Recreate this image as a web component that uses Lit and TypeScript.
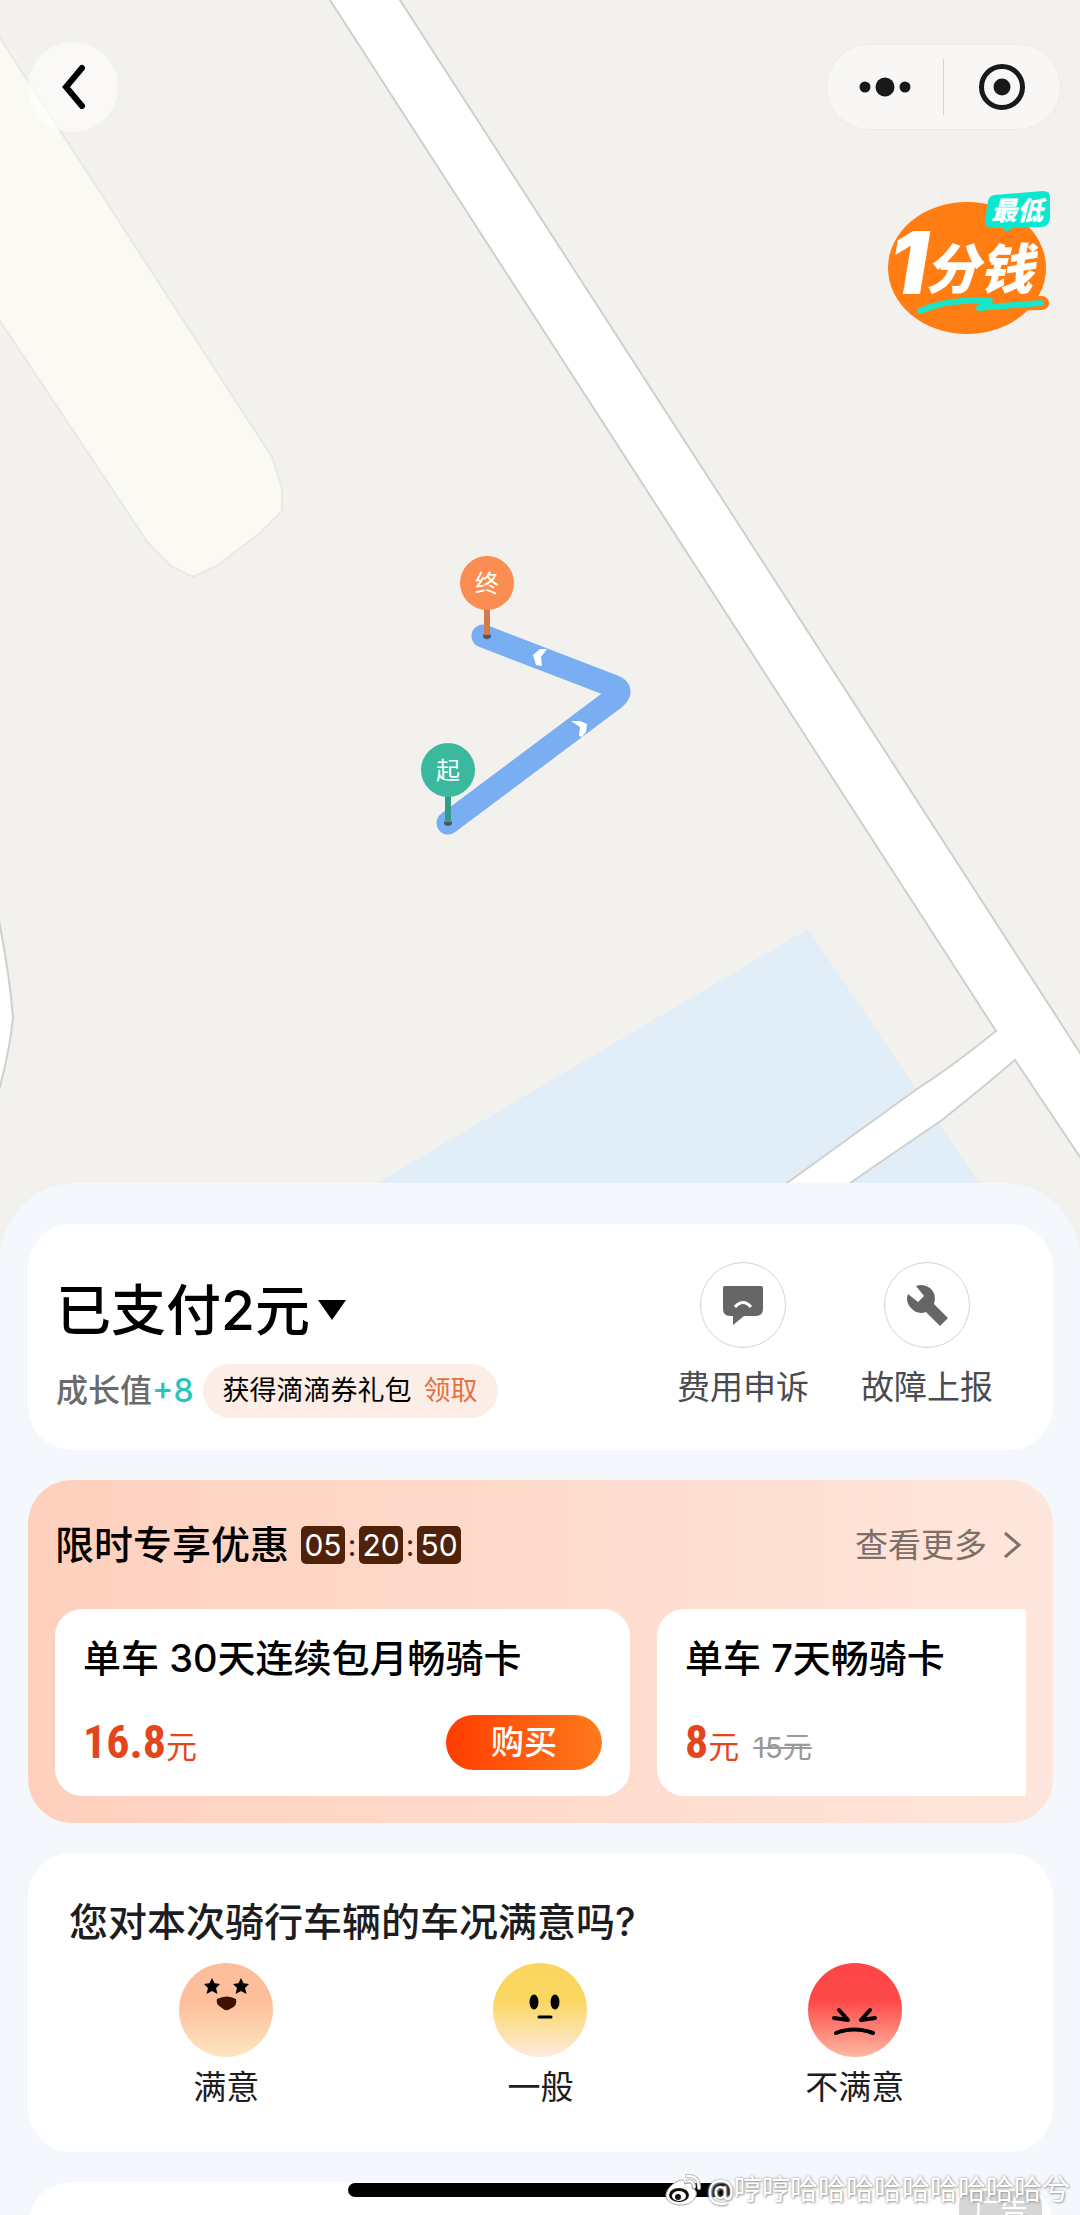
import { LitElement, html, css, svg, nothing } from 'lit';
import { customElement, property } from 'lit/decorators.js';

export interface RidePlan {
  name: string;
  price: string;
  original?: string;
  action?: string;
}

export interface RatingOption {
  label: string;
  mood: 'happy' | 'neutral' | 'angry';
}

@customElement('ride-map')
export class RideMap extends LitElement {
  static styles = css`
    :host {
      display: block;
      position: relative;
      background: #f2f1ed;
    }
    .map {
      display: block;
      width: 100%;
      height: auto;
    }
    .pin-text {
      font-family: "Noto Sans CJK SC", sans-serif;
      font-size: 24px;
      fill: #fff;
      text-anchor: middle;
    }
    button {
      border: 0;
      padding: 0;
      margin: 0;
      background: none;
      cursor: pointer;
    }
    svg {
      display: block;
    }
    .topbar {
      position: absolute;
      top: 42px;
      left: 28px;
      right: 19px;
      display: flex;
      justify-content: space-between;
      align-items: center;
    }
    .back {
      width: 90px;
      height: 90px;
      border-radius: 50%;
      background: rgba(255, 255, 255, 0.6);
      display: grid;
      place-items: center;
    }
    .capsule {
      display: flex;
      align-items: center;
      width: 235px;
      height: 86px;
      box-sizing: border-box;
      border: 1px solid #ecebe8;
      border-radius: 43px;
      background: #f8f7f5;
    }
    .capsule button {
      flex: 1;
      display: grid;
      place-items: center;
    }
    .divider {
      width: 1px;
      height: 56px;
      background: #d6d5d2;
    }
    .promo {
      position: absolute;
      top: 188px;
      right: 26px;
    }
    .promo text {
      font-family: Inter, "Noto Sans CJK SC", sans-serif;
      font-weight: 900;
      font-style: italic;
      fill: #fff;
    }
    .promo-one {
      font-size: 86px;
    }
    .promo-unit {
      font-size: 54px;
    }
    .promo-tag {
      font-size: 26px;
    }
  `;

  private _renderPin(x: number, y: number, label: string, fill: string, stem: string) {
    return svg`
      <ellipse cx=${x} cy=${y + 53} rx="4" ry="3" fill="#4b5a6b" />
      <rect x=${x - 3} y=${y + 24} width="6" height="28" fill=${stem} />
      <circle cx=${x} cy=${y} r="27" fill=${fill} />
      <text class="pin-text" x=${x} y=${y + 9}>${label}</text>
    `;
  }

  render() {
    return html`
      <svg class="map" viewBox="0 0 1080 1260" role="img" aria-label="骑行路线">
        <rect width="1080" height="1260" fill="#f2f1ed" />
        <path d="M-2 35 L272 457 L282 489 V511 L260 533 L217 566 L193 577 L171 566 L148 543 L-2 318Z"
          fill="#fafaf2" stroke="#e9e8e1" stroke-width="2" />
        <path d="M808 929 L377 1183 L250 1260 H1032Z" fill="#e1eef8" />
        <path d="M328 -3 L996 1031 Q950 1068 917 1089 L787 1183 L680 1260 H740 L850 1183 L942 1120 Q980 1090 1015 1060 L1082 1160 V1056 L398 -3Z"
          fill="#fff" stroke="#cfcfcd" stroke-width="2" />
        <path d="M-2 916 Q9 970 13 1017 Q10 1050 -2 1094Z" fill="#fff" stroke="#cfcfcd" stroke-width="2" />
        <path d="M448 823 L615 698 Q624 690 613 686 L483 636" fill="none" stroke="#79aff2" stroke-width="23"
          stroke-linecap="round" stroke-linejoin="round" />
        <path d="M533 655 l7 -6 h7 l-6 8 l1 9 l-6 -1z" fill="#fff" />
        <path d="M571 721 l9 0 l7 3 l-1 8 l-4 5 l-3 -1 l1 -9z" fill="#fff" />
        ${this._renderPin(487, 583, '终', '#fb8d52', '#d57a4b')}
        ${this._renderPin(448, 770, '起', '#3bb99f', '#329c87')}
      </svg>

      <div class="topbar">
        <button class="back" aria-label="返回">
          <svg width="30" height="50" viewBox="0 0 30 50">
            <path d="M24 6 L8 25 L24 44" fill="none" stroke="#000" stroke-width="6" stroke-linecap="round" />
          </svg>
        </button>
        <div class="capsule">
          <button aria-label="更多">
            <svg width="54" height="20" viewBox="0 0 54 20" fill="#19191a">
              <circle cx="7" cy="10" r="5.5" />
              <circle cx="27" cy="10" r="9.5" />
              <circle cx="47" cy="10" r="5.5" />
            </svg>
          </button>
          <span class="divider"></span>
          <button aria-label="关闭">
            <svg width="48" height="48" viewBox="0 0 48 48">
              <circle cx="24" cy="24" r="20.5" fill="none" stroke="#19191a" stroke-width="5" />
              <circle cx="24" cy="24" r="8.5" fill="#19191a" />
            </svg>
          </button>
        </div>
      </div>

      <button class="promo" aria-label="最低1分钱">
        <svg width="168" height="150" viewBox="0 0 168 150">
          <ellipse cx="81" cy="80" rx="79" ry="66" fill="#ff7d12" />
          <path d="M32 122 C50 111 75 107 104 111 L91 117 L156 115" fill="none" stroke="#ff7d12"
            stroke-width="14" stroke-linecap="round" stroke-linejoin="round" />
          <path d="M34 123 C54 114 76 111 104 113 L93 120 L155 115" fill="none" stroke="#1be5c8"
            stroke-width="6" stroke-linecap="round" stroke-linejoin="round" />
          <path d="M108 7 L157 3 Q164 3 164 9 V31 Q163 38 156 39 L126 40 L121 44 L117 40 L105 40 Q98 39 99 32 L102 13 Q103 8 108 7Z"
            fill="#0ce8cf" />
          <text class="promo-one" x="3" y="106">1</text>
          <text class="promo-unit" x="39" y="101">分钱</text>
          <text class="promo-tag" x="105" y="32">最低</text>
        </svg>
      </button>
    `;
  }
}

@customElement('rating-face')
export class RatingFace extends LitElement {
  static styles = css`
    :host {
      display: block;
    }
    svg {
      display: block;
    }
  `;

  @property()
  mood: RatingOption['mood'] = 'happy';

  private _colors() {
    if (this.mood === 'happy') return ['#fcbd9c', '#fdbf9b', '#fde5c2'];
    if (this.mood === 'neutral') return ['#fad65f', '#fad761', '#fdeae0'];
    return ['#fe4547', '#fd4948', '#fdb9a3'];
  }

  private _features() {
    if (this.mood === 'happy') {
      const star = 'M0 -8 L2.5 -2.8 L8 -2 L4 2 L5.5 8 L0 5 L-5.5 8 L-4 2 L-8 -2 L-2.5 -2.8Z';
      return svg`
        <path d=${star} transform="translate(33 23)" />
        <path d=${star} transform="translate(62 23)" />
        <path d="M38 36 Q48 31 57 36 Q59 43 51 46 Q47 49 43 45 Q36 41 38 36Z" fill="#3f1200" />
      `;
    }
    if (this.mood === 'neutral') {
      return svg`
        <ellipse cx="41" cy="39" rx="4.5" ry="7.5" />
        <ellipse cx="62" cy="39" rx="4.5" ry="7.5" />
        <path d="M46 54 H58" fill="none" stroke="#000" stroke-width="3" stroke-linecap="round" />
      `;
    }
    return svg`
      <g fill="none" stroke="#000" stroke-width="4" stroke-linecap="round" stroke-linejoin="round">
        <path d="M31 47 L40 57 L26 55" />
        <path d="M62 47 L53 57 L67 55" />
        <path d="M28 70 Q46 63 65 70" />
      </g>
    `;
  }

  render() {
    const [top, mid, bottom] = this._colors();
    return html`
      <svg width="94" height="94" viewBox="0 0 94 94" aria-hidden="true">
        <defs>
          <linearGradient id="skin" x1="0" y1="0" x2="0" y2="1">
            <stop offset="0" stop-color=${top} />
            <stop offset="0.4" stop-color=${mid} />
            <stop offset="1" stop-color=${bottom} />
          </linearGradient>
        </defs>
        <circle cx="47" cy="47" r="47" fill="url(#skin)" />
        ${this._features()}
      </svg>
    `;
  }
}

@customElement('app-root')
export class AppRoot extends LitElement {
  static styles = css`
    :host {
      display: block;
      position: relative;
      height: 100vh;
      overflow: hidden;
      font-family: Inter, "Noto Sans CJK SC", sans-serif;
      font-size: 33px;
      color: #000;
      background: #f4f8fd;
    }
    h1,
    h2,
    h3,
    p {
      margin: 0;
    }
    button {
      border: 0;
      padding: 0;
      background: none;
      font: inherit;
      color: inherit;
      cursor: pointer;
    }
    a {
      color: inherit;
      text-decoration: none;
    }
    svg {
      display: block;
    }
    .sheet {
      position: relative;
      margin-top: -77px;
      padding: 41px 27px 0 28px;
      border-radius: 76px 76px 0 0;
      background: #f4f8fd;
      display: flex;
      flex-direction: column;
      gap: 30px;
    }
    .card {
      border-radius: 44px;
      background: #fff;
    }

    .payment {
      display: flex;
      justify-content: space-between;
      align-items: flex-start;
      padding: 38px 60px 32px 28px;
    }
    .paid {
      display: flex;
      align-items: center;
      gap: 8px;
      font-size: 55px;
      font-weight: 500;
      line-height: 96px;
    }
    .reward {
      display: flex;
      align-items: center;
      gap: 9px;
      margin-top: 6px;
      line-height: 54px;
    }
    .growth {
      font-size: 32px;
      font-weight: 500;
      color: #6b6b6b;
    }
    .growth-value {
      color: #2bc4bc;
    }
    .gift {
      display: flex;
      gap: 12px;
      padding: 0 20px;
      border-radius: 27px;
      background: #fceee7;
      font-size: 27px;
    }
    .gift-action {
      color: #e6703f;
    }
    .actions {
      display: flex;
      gap: 52px;
    }
    .action {
      display: flex;
      flex-direction: column;
      align-items: center;
      gap: 15px;
      line-height: 48px;
      color: #4a4b50;
    }
    .action-icon {
      display: grid;
      place-items: center;
      width: 86px;
      height: 86px;
      box-sizing: border-box;
      border: 1px solid #d4d4d4;
      border-radius: 50%;
    }

    .offers {
      padding: 38px 27px 27px;
      background: linear-gradient(90deg, #fed0bd, #fee6dc);
    }
    .offers-head {
      display: flex;
      justify-content: space-between;
      align-items: center;
      line-height: 54px;
    }
    .offers-title {
      display: flex;
      align-items: center;
      gap: 12px;
    }
    .heading {
      font-size: 39px;
      font-weight: 500;
    }
    .timer {
      display: flex;
      align-items: center;
      font-size: 30px;
      line-height: 38px;
      color: #4f2209;
    }
    .timer b {
      width: 44px;
      border-radius: 5px;
      background: #4f2209;
      color: #fff;
      font-weight: 400;
      text-align: center;
    }
    .timer i {
      width: 14px;
      font-style: normal;
      text-align: center;
    }
    .more {
      display: flex;
      align-items: center;
      gap: 16px;
      padding-right: 3px;
      color: #7d6f69;
    }
    .plans {
      display: flex;
      gap: 27px;
      margin-top: 37px;
      overflow: hidden;
    }
    .plan {
      flex: 0 0 575px;
      box-sizing: border-box;
      padding: 22px 28px 26px;
      border-radius: 27px;
      background: #fff;
    }
    .plan-name {
      font-size: 38px;
      font-weight: 500;
      line-height: 54px;
    }
    .plan-row {
      display: flex;
      align-items: center;
      justify-content: space-between;
      height: 55px;
      margin-top: 30px;
    }
    .price {
      display: flex;
      align-items: baseline;
      padding-top: 4px;
      font-size: 31px;
      line-height: 54px;
      color: #e5451b;
    }
    .price strong {
      font-family: "Liberation Sans Narrow", "Roboto Condensed", "Liberation Sans", sans-serif;
      font-size: 46px;
    }
    .price del {
      margin-left: 14px;
      font-size: 29px;
      color: #999;
    }
    .buy {
      width: 156px;
      border-radius: 28px;
      background: linear-gradient(90deg, #ff3d00, #ff7a1c);
      color: #fff;
      font-weight: 500;
      line-height: 55px;
    }

    .survey {
      padding: 42px 41px 41px;
    }
    .question {
      line-height: 54px;
      color: #1d1d1f;
    }
    .ratings {
      display: grid;
      grid-template-columns: repeat(3, 1fr);
      margin-top: 14px;
    }
    .rating {
      display: flex;
      flex-direction: column;
      align-items: center;
      gap: 6px;
      line-height: 48px;
      color: #1d1d1f;
    }

    .ad {
      display: flex;
      justify-content: flex-end;
      height: 220px;
      padding: 9px 11px 0;
      box-sizing: border-box;
    }
    .ad-tag {
      width: 83px;
      height: 40px;
      border-radius: 14px;
      background: #d6d6d6;
      color: #fff;
      font-size: 27px;
      line-height: 40px;
      text-align: center;
    }

    .home-bar {
      position: absolute;
      bottom: 18px;
      left: 50%;
      width: 384px;
      height: 14px;
      margin-left: -192px;
      border-radius: 7px;
      background: #000;
    }
    .watermark {
      position: absolute;
      right: 10px;
      bottom: 6px;
      display: flex;
      align-items: center;
      gap: 5px;
      font-size: 28px;
      line-height: 38px;
      color: #fff;
      text-shadow: 0 0 3px #999, 1px 1px 2px #aaa;
    }
  `;

  @property({ type: Array })
  countdown: string[] = ['05', '20', '50'];

  @property({ type: Array })
  plans: RidePlan[] = [
    { name: '单车 30天连续包月畅骑卡', price: '16.8', action: '购买' },
    { name: '单车 7天畅骑卡', price: '8', original: '15元' },
  ];

  @property({ type: Array })
  ratings: RatingOption[] = [
    { label: '满意', mood: 'happy' },
    { label: '一般', mood: 'neutral' },
    { label: '不满意', mood: 'angry' },
  ];

  private _renderPayment() {
    return html`
      <section class="card payment">
        <div>
          <h1>
            <button class="paid">
              已支付2元
              <svg width="28" height="20" viewBox="0 0 28 20"><path d="M0 0 H28 L14 20Z" /></svg>
            </button>
          </h1>
          <div class="reward">
            <span class="growth">成长值<span class="growth-value">+8</span></span>
            <button class="gift">
              <span>获得滴滴券礼包</span>
              <span class="gift-action">领取</span>
            </button>
          </div>
        </div>
        <div class="actions">
          <button class="action">
            <span class="action-icon">
              <svg width="42" height="40" viewBox="0 0 42 40">
                <path d="M3 1 H39 Q41 1 41 3 V24 Q41 31 34 31 H22 L11 40 V31 H8 Q1 31 1 24 V3 Q1 1 3 1Z" fill="#666" />
                <path d="M13 22 Q21 13 29 22" fill="none" stroke="#fff" stroke-width="3" />
              </svg>
            </span>
            费用申诉
          </button>
          <button class="action">
            <span class="action-icon">
              <svg width="42" height="42" viewBox="0 0 42 42">
                <path d="M10 2 Q17 -1 24 4 Q31 10 28 20 L42 34 L34 42 L20 28 Q11 31 5 24 Q-1 18 2 10 L12 18 L18 12Z" fill="#666" />
              </svg>
            </span>
            故障上报
          </button>
        </div>
      </section>
    `;
  }

  private _renderPlan(plan: RidePlan) {
    return html`
      <article class="plan">
        <h3 class="plan-name">${plan.name}</h3>
        <div class="plan-row">
          <p class="price">
            <strong>${plan.price}</strong>元
            ${plan.original ? html`<del>${plan.original}</del>` : nothing}
          </p>
          ${plan.action ? html`<button class="buy">${plan.action}</button>` : nothing}
        </div>
      </article>
    `;
  }

  render() {
    return html`
      <ride-map></ride-map>
      <main class="sheet">
        ${this._renderPayment()}

        <section class="card offers">
          <div class="offers-head">
            <div class="offers-title">
              <h2 class="heading">限时专享优惠</h2>
              <div class="timer">
                ${this.countdown.map((part, i) => html`${i > 0 ? html`<i>:</i>` : nothing}<b>${part}</b>`)}
              </div>
            </div>
            <a class="more" href="#">
              查看更多
              <svg width="20" height="28" viewBox="0 0 20 28">
                <path d="M2 2 L16 14 L2 26" fill="none" stroke="#7d6f69" stroke-width="3" />
              </svg>
            </a>
          </div>
          <div class="plans">${this.plans.map(plan => this._renderPlan(plan))}</div>
        </section>

        <section class="card survey">
          <h2 class="heading question">您对本次骑行车辆的车况满意吗?</h2>
          <div class="ratings">
            ${this.ratings.map(item => html`
              <button class="rating">
                <rating-face mood=${item.mood}></rating-face>
                ${item.label}
              </button>
            `)}
          </div>
        </section>

        <section class="card ad">
          <span class="ad-tag">广告</span>
        </section>
      </main>

      <div class="home-bar"></div>
      <div class="watermark">
        <svg width="38" height="34" viewBox="0 0 38 34">
          <path d="M14 8 Q20 5 21 11 Q29 8 28 15 Q35 18 31 25 Q26 33 14 32 Q1 30 2 21 Q4 13 14 8Z" fill="#fff" stroke="#aaa" />
          <ellipse cx="15" cy="22" rx="10" ry="7" fill="#111" />
          <ellipse cx="15" cy="23" rx="7" ry="5" fill="#fff" />
          <circle cx="14" cy="24" r="3" fill="#111" />
          <path d="M23 3 Q35 2 35 15 M24 8 Q30 8 30 14" fill="none" stroke="#bbb" stroke-width="4" stroke-linecap="round" />
          <path d="M23 3 Q35 2 35 15 M24 8 Q30 8 30 14" fill="none" stroke="#fff" stroke-width="2" stroke-linecap="round" />
        </svg>
        @哼哼哈哈哈哈哈哈哈哈哈兮
      </div>
    `;
  }
}

declare global {
  interface HTMLElementTagNameMap {
    'ride-map': RideMap;
    'rating-face': RatingFace;
    'app-root': AppRoot;
  }
}
